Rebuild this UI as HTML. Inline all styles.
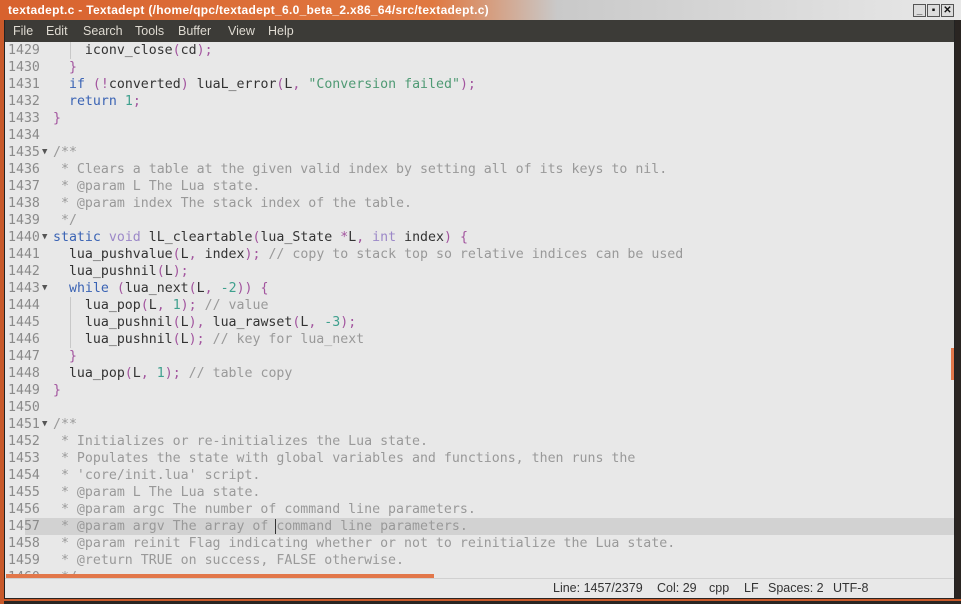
<!DOCTYPE html><html><head><meta charset="utf-8"><style>
*{margin:0;padding:0;box-sizing:border-box}
body{width:961px;height:604px;overflow:hidden;background:#2b2b2b;position:relative;font-family:"Liberation Sans",sans-serif}
#win{position:absolute;left:0;top:0;width:961px;height:604px;background:#2a2522;}
#title{position:absolute;left:0;top:0;width:961px;height:20px;background:linear-gradient(90deg,#d8622e 0%,#e07840 45%,#c9c9c9 58%,#e8e8e8 100%);color:#fff;font-weight:bold;font-size:12px;line-height:20px;padding-left:8px;letter-spacing:0.3px}
.wb{position:absolute;top:4px;width:13px;height:13px;border:1px solid #555;background:#ddd;font-size:10px;line-height:11px;text-align:center;color:#111;font-weight:bold}
#lb{position:absolute;left:0;top:20px;width:4px;height:584px;background:#c8592a}
#bb{position:absolute;left:0;top:599px;width:961px;height:2px;background:#c8592a}
#frame{position:absolute;left:4px;top:20px;width:951px;height:578px;background:#e8e8e8;border-left:1px solid #222;border-right:1px solid #222}
#menu{position:absolute;left:0;top:0;width:949px;height:22px;background:#3c3b37;color:#dfdbd2;font-size:12.5px;line-height:23px}
#menu span{position:absolute}
#ed{position:absolute;left:0;top:22px;width:949px;height:536px;overflow:hidden;font-family:"DejaVu Sans Mono",monospace;font-size:13.25px;color:#333}
.l{height:17px;line-height:17px;white-space:pre;position:relative}
.n{position:absolute;left:3px;color:#8a8a8a;width:40px}
.c{position:absolute;left:48px}
.f{position:absolute;left:37px;top:0;color:#555;font-size:9px}
.hl{position:absolute;left:20px;top:476px;width:929px;height:17px;background:#d2d2d2}
.k{color:#3a63b4}.t{color:#9c88c8}.s{color:#4f9a74}.d{color:#3fa08e}.p{color:#a2549e}.m{color:#999}
.g{position:absolute;left:65px;top:0;width:1px;height:17px;background:#c8c8c8}
#status{position:absolute;left:0;top:558px;width:949px;height:20px;background:#e8e8e8;border-top:1px solid #d0d0d0;font-size:12.5px;color:#333;line-height:19px;}
</style></head><body><div id="win">
<div id="title">textadept.c - Textadept (/home/qpc/textadept_6.0_beta_2.x86_64/src/textadept.c)</div>
<div class="wb" style="left:913px">_</div><div class="wb" style="left:927px">▪</div><div class="wb" style="left:941px">✕</div>
<div id="lb"></div><div id="bb"></div>
<div id="frame">
<div id="menu"><span style="left:8px">File</span><span style="left:41px">Edit</span><span style="left:78px">Search</span><span style="left:130px">Tools</span><span style="left:173px">Buffer</span><span style="left:223px">View</span><span style="left:263px">Help</span></div>
<div id="ed">
<div class="hl"></div>
<div class="l"><span class="g"></span><span class="n">1429</span><span class="c">    iconv_close<span class="p">(</span>cd<span class="p">);</span></span></div>
<div class="l"><span class="n">1430</span><span class="c">  <span class="p">}</span></span></div>
<div class="l"><span class="n">1431</span><span class="c">  <span class="k">if</span> <span class="p">(!</span>converted<span class="p">)</span> luaL_error<span class="p">(</span>L<span class="p">,</span> <span class="s">"Conversion failed"</span><span class="p">);</span></span></div>
<div class="l"><span class="n">1432</span><span class="c">  <span class="k">return</span> <span class="d">1</span><span class="p">;</span></span></div>
<div class="l"><span class="n">1433</span><span class="c"><span class="p">}</span></span></div>
<div class="l"><span class="n">1434</span></div>
<div class="l"><span class="n">1435</span><span class="f">▼</span><span class="c m">/**</span></div>
<div class="l"><span class="n">1436</span><span class="c m"> * Clears a table at the given valid index by setting all of its keys to nil.</span></div>
<div class="l"><span class="n">1437</span><span class="c m"> * @param L The Lua state.</span></div>
<div class="l"><span class="n">1438</span><span class="c m"> * @param index The stack index of the table.</span></div>
<div class="l"><span class="n">1439</span><span class="c m"> */</span></div>
<div class="l"><span class="n">1440</span><span class="f">▼</span><span class="c"><span class="k">static</span> <span class="t">void</span> lL_cleartable<span class="p">(</span>lua_State <span class="p">*</span>L<span class="p">,</span> <span class="t">int</span> index<span class="p">)</span> <span class="p">{</span></span></div>
<div class="l"><span class="n">1441</span><span class="c">  lua_pushvalue<span class="p">(</span>L<span class="p">,</span> index<span class="p">);</span> <span class="m">// copy to stack top so relative indices can be used</span></span></div>
<div class="l"><span class="n">1442</span><span class="c">  lua_pushnil<span class="p">(</span>L<span class="p">);</span></span></div>
<div class="l"><span class="n">1443</span><span class="f">▼</span><span class="c">  <span class="k">while</span> <span class="p">(</span>lua_next<span class="p">(</span>L<span class="p">,</span> <span class="d">-2</span><span class="p">))</span> <span class="p">{</span></span></div>
<div class="l"><span class="g"></span><span class="n">1444</span><span class="c">    lua_pop<span class="p">(</span>L<span class="p">,</span> <span class="d">1</span><span class="p">);</span> <span class="m">// value</span></span></div>
<div class="l"><span class="g"></span><span class="n">1445</span><span class="c">    lua_pushnil<span class="p">(</span>L<span class="p">),</span> lua_rawset<span class="p">(</span>L<span class="p">,</span> <span class="d">-3</span><span class="p">);</span></span></div>
<div class="l"><span class="g"></span><span class="n">1446</span><span class="c">    lua_pushnil<span class="p">(</span>L<span class="p">);</span> <span class="m">// key for lua_next</span></span></div>
<div class="l"><span class="n">1447</span><span class="c">  <span class="p">}</span></span></div>
<div class="l"><span class="n">1448</span><span class="c">  lua_pop<span class="p">(</span>L<span class="p">,</span> <span class="d">1</span><span class="p">);</span> <span class="m">// table copy</span></span></div>
<div class="l"><span class="n">1449</span><span class="c"><span class="p">}</span></span></div>
<div class="l"><span class="n">1450</span></div>
<div class="l"><span class="n">1451</span><span class="f">▼</span><span class="c m">/**</span></div>
<div class="l"><span class="n">1452</span><span class="c m"> * Initializes or re-initializes the Lua state.</span></div>
<div class="l"><span class="n">1453</span><span class="c m"> * Populates the state with global variables and functions, then runs the</span></div>
<div class="l"><span class="n">1454</span><span class="c m"> * 'core/init.lua' script.</span></div>
<div class="l"><span class="n">1455</span><span class="c m"> * @param L The Lua state.</span></div>
<div class="l"><span class="n">1456</span><span class="c m"> * @param argc The number of command line parameters.</span></div>
<div class="l"><span class="n">1457</span><span class="c m"> * @param argv The array of <span style="border-left:1px solid #333;margin-left:-1px"></span>command line parameters.</span></div>
<div class="l"><span class="n">1458</span><span class="c m"> * @param reinit Flag indicating whether or not to reinitialize the Lua state.</span></div>
<div class="l"><span class="n">1459</span><span class="c m"> * @return TRUE on success, FALSE otherwise.</span></div>
<div class="l"><span class="n">1460</span><span class="c m"> */</span></div>
</div>
<div style="position:absolute;left:1px;top:554px;width:428px;height:4px;background:#e2774a"></div>
<div style="position:absolute;left:946px;top:328px;width:3px;height:32px;background:#e2774a"></div>
<div id="status"><span style="position:absolute;left:548px">Line: 1457/2379</span><span style="position:absolute;left:652px">Col: 29</span><span style="position:absolute;left:704px">cpp</span><span style="position:absolute;left:739px">LF</span><span style="position:absolute;left:763px">Spaces: 2</span><span style="position:absolute;left:828px">UTF-8</span></div>
</div></div></body></html>
